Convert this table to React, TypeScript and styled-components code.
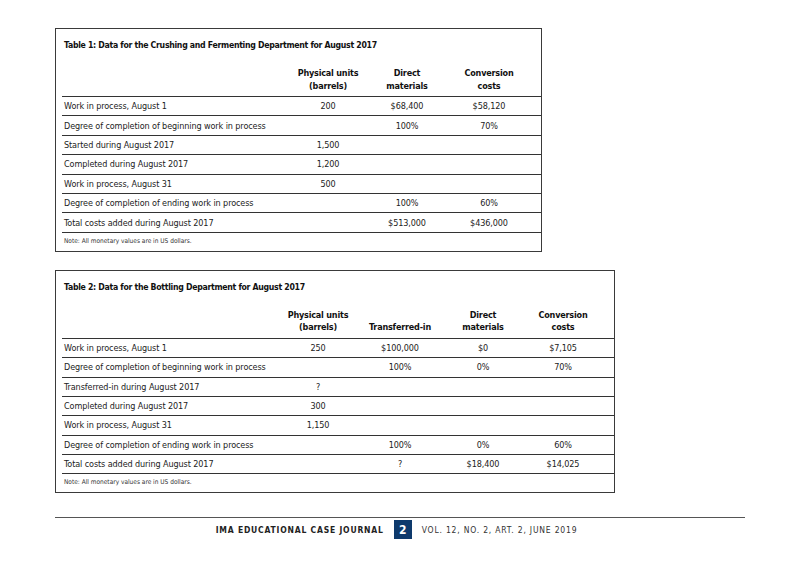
import React from "react"
import styled, { createGlobalStyle } from "styled-components"

const GlobalStyle = createGlobalStyle`
html, body {
  margin: 0;
  padding: 0;
  background: #ffffff;
}
body {
  font-family: "DejaVu Sans Condensed", "DejaVu Sans", "Liberation Sans", sans-serif;
  font-stretch: condensed;
  color: #231f20;
}
`

type Row = { label: string; values: string[] }

type TableData = {
  title: string
  headers: string[][]
  rows: Row[]
  columns: string
}

const table1: TableData = {
  title: "Table 1: Data for the Crushing and Fermenting Department for August 2017",
  headers: [["Physical units", "(barrels)"], ["Direct", "materials"], ["Conversion", "costs"]],
  columns: "228px 76px 82px 82px",
  rows: [
    { label: "Work in process, August 1", values: ["200", "$68,400", "$58,120"] },
    { label: "Degree of completion of beginning work in process", values: ["", "100%", "70%"] },
    { label: "Started during August 2017", values: ["1,500", "", ""] },
    { label: "Completed during August 2017", values: ["1,200", "", ""] },
    { label: "Work in process, August 31", values: ["500", "", ""] },
    { label: "Degree of completion of ending work in process", values: ["", "100%", "60%"] },
    { label: "Total costs added during August 2017", values: ["", "$513,000", "$436,000"] }
  ]
}

const table2: TableData = {
  title: "Table 2: Data for the Bottling Department for August 2017",
  headers: [["Physical units", "(barrels)"], ["Transferred-in"], ["Direct", "materials"], ["Conversion", "costs"]],
  columns: "219px 74px 90px 76px 84px",
  rows: [
    { label: "Work in process, August 1", values: ["250", "$100,000", "$0", "$7,105"] },
    { label: "Degree of completion of beginning work in process", values: ["", "100%", "0%", "70%"] },
    { label: "Transferred-in during August 2017", values: ["?", "", "", ""] },
    { label: "Completed during August 2017", values: ["300", "", "", ""] },
    { label: "Work in process, August 31", values: ["1,150", "", "", ""] },
    { label: "Degree of completion of ending work in process", values: ["", "100%", "0%", "60%"] },
    { label: "Total costs added during August 2017", values: ["", "?", "$18,400", "$14,025"] }
  ]
}

function DataTable({ data, width }: { data: TableData; width: number }) {
  return (
    <Box $width={width}>
      <Title>{data.title}</Title>
      <HeaderRow $columns={data.columns}>
        <span />
        {data.headers.map((lines, i) => (
          <HeadCell key={i}>
            {lines.map((line) => (
              <div key={line}>{line}</div>
            ))}
          </HeadCell>
        ))}
      </HeaderRow>
      {data.rows.map((row) => (
        <BodyRow key={row.label} $columns={data.columns}>
          <Label>{row.label}</Label>
          {row.values.map((value, i) => (
            <Value key={i}>{value}</Value>
          ))}
        </BodyRow>
      ))}
      <Note>Note: All monetary values are in US dollars.</Note>
    </Box>
  )
}

export default function App() {
  return (
    <Page>
      <GlobalStyle />
      <Tables>
        <DataTable data={table1} width={487} />
        <DataTable data={table2} width={560} />
      </Tables>
      <Footer>
        <Journal>IMA EDUCATIONAL CASE JOURNAL</Journal>
        <PageNumber>2</PageNumber>
        <Issue>VOL. 12, NO. 2, ART. 2, JUNE 2019</Issue>
      </Footer>
    </Page>
  )
}

const Page = styled.div`
width: 805px;
height: 574px;
box-sizing: border-box;
padding: 28px 0 0 55px;
`

const Tables = styled.div`
display: flex;
flex-direction: column;
align-items: flex-start;
gap: 18px;
`

const Box = styled.div<{ $width: number }>`
width: ${(p) => p.$width}px;
box-sizing: border-box;
border: 1px solid #3a3a3a;
padding: 11px 0 6px 6px;
`

const Title = styled.div`
font-weight: 700;
font-size: 8.7px;
line-height: 11px;
letter-spacing: -0.3px;
padding-left: 2px;
color: #111;
`

const HeaderRow = styled.div<{ $columns: string }>`
display: grid;
grid-template-columns: ${(p) => p.$columns};
align-items: end;
margin-top: 16px;
padding-bottom: 4px;
border-bottom: 1px solid #333;
`

const HeadCell = styled.div`
font-weight: 700;
font-size: 9px;
line-height: 12.5px;
letter-spacing: -0.2px;
text-align: center;
color: #111;
`

const BodyRow = styled.div<{ $columns: string }>`
display: grid;
grid-template-columns: ${(p) => p.$columns};
align-items: center;
height: 18.4px;
border-bottom: 1px solid #333;
font-size: 9px;
letter-spacing: -0.1px;
color: #222;
`

const Label = styled.div`
padding-left: 2px;
white-space: nowrap;
`

const Value = styled.div`
text-align: center;
`

const Note = styled.div`
font-size: 6.5px;
line-height: 8px;
padding: 4px 0 0 2px;
color: #333;
`

const Footer = styled.div`
width: 690px;
margin-top: 24px;
border-top: 1.5px solid #555;
padding: 2px 7px 0 0;
box-sizing: border-box;
display: flex;
justify-content: center;
align-items: center;
gap: 10px;
`

const Journal = styled.div`
font-weight: 700;
font-size: 8.5px;
letter-spacing: 0.8px;
color: #222;
`

const PageNumber = styled.div`
width: 18px;
height: 19px;
background: #0e3a6c;
color: #fff;
font-weight: 700;
font-size: 12px;
display: flex;
align-items: center;
justify-content: center;
`

const Issue = styled.div`
font-size: 8.5px;
letter-spacing: 0.8px;
color: #333;
`
